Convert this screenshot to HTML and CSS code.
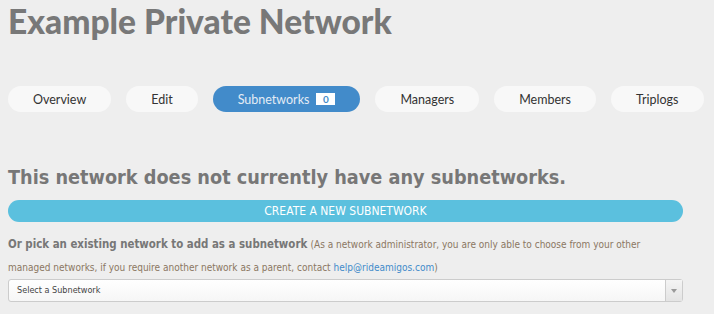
FILE: index.html
```html
<!DOCTYPE html>
<html>
<head>
    <title>Example Private Network</title>
    <link rel="stylesheet" href="styles.css">
</head>
<body>
    <div class="page">
        <h1 class="title">Example Private Network</h1>

        <div class="tabs">
            <a class="tab">Overview</a>
            <a class="tab">Edit</a>
            <a class="tab active">Subnetworks <span class="badge">0</span></a>
            <a class="tab">Managers</a>
            <a class="tab">Members</a>
            <a class="tab">Triplogs</a>
        </div>

        <h2 class="empty">This network does not currently have any subnetworks.</h2>
        <button class="create-btn">CREATE A NEW SUBNETWORK</button>

        <p class="pick">
            <strong>Or pick an existing network to add as a subnetwork</strong>
            <span class="note">(As a network administrator, you are only able to choose from your other managed networks, if you require another network as a parent, contact <a href="#">help@rideamigos.com</a>)</span>
        </p>

        <div class="select">
            <span class="select-label">Select a Subnetwork</span>
            <span class="select-arrow"><span class="caret"></span></span>
        </div>
    </div>
</body>
</html>
```

FILE: styles.css
```css
body {
    margin: 0;
    background: #eeeeee;
    font-family: "DejaVu Sans Condensed", "Liberation Sans", sans-serif;
}

.page {
    width: 675px;
    padding: 0 31px 0 8px;
}

.title {
    margin: 0;
    padding-top: 2px;
    font-family: Lato, "Liberation Sans", sans-serif;
    font-size: 33.5px;
    line-height: 38px;
    font-weight: 900;
    color: #787878;
}

.tabs {
    display: flex;
    gap: 15px;
    margin-top: 46px;
    width: 698px;
}

.tab {
    display: flex;
    align-items: center;
    gap: 7px;
    height: 26px;
    padding: 0 25px;
    border-radius: 13px;
    background: #f8f8f8;
    color: #333333;
    font-family: Lato, "Liberation Sans", sans-serif;
    font-size: 12.5px;
}

.tab.active {
    background: #428bca;
    color: #e4ecf5;
}

.badge {
    display: inline-block;
    width: 19px;
    height: 12px;
    line-height: 12px;
    background: #ffffff;
    color: #428bca;
    font-size: 10px;
    font-weight: 700;
    text-align: center;
}

.empty {
    margin: 54px 0 0;
    font-size: 19.7px;
    line-height: 24px;
    font-weight: 700;
    color: #777777;
}

.create-btn {
    display: block;
    width: 100%;
    height: 22px;
    margin-top: 10px;
    border: none;
    border-radius: 11px;
    background: #5bc0de;
    color: #ffffff;
    font-family: inherit;
    font-size: 12px;
    padding: 0;
}

.pick {
    margin: 11px 0 0;
    line-height: 23px;
    font-size: 11.4px;
}

.pick strong {
    color: #777777;
}

.note {
    color: #8b7762;
    font-size: 10px;
}

.note a {
    color: #428bca;
    text-decoration: none;
}

.select {
    display: flex;
    height: 23px;
    border: 1px solid #cccccc;
    border-radius: 3px;
    background: linear-gradient(#ffffff, #f6f6f6);
    box-sizing: border-box;
}

.select-label {
    flex: 1;
    padding-left: 8px;
    line-height: 21px;
    font-size: 9px;
    color: #444444;
}

.select-arrow {
    width: 16px;
    border-left: 1px solid #cccccc;
    background: linear-gradient(#f4f4f4, #e4e4e4);
    display: flex;
    align-items: center;
    justify-content: center;
}

.caret {
    width: 0;
    height: 0;
    border-left: 3px solid transparent;
    border-right: 3px solid transparent;
    border-top: 4px solid #999999;
}
```
